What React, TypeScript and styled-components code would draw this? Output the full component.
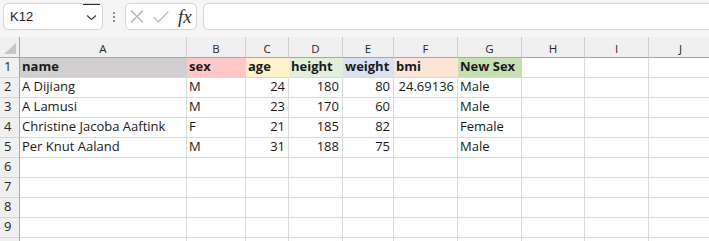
import React from 'react';
import styled, { createGlobalStyle } from 'styled-components';

const GlobalStyle = createGlobalStyle`
  html, body {
    margin: 0;
    padding: 0;
    background: #ffffff;
    overflow: hidden;
  }
  body {
    font-family: "Open Sans", "Noto Sans", sans-serif;
    color: #1f1f1f;
  }
`;

const COLS = [
  { key: 'A', width: 167 },
  { key: 'B', width: 59 },
  { key: 'C', width: 43 },
  { key: 'D', width: 54 },
  { key: 'E', width: 51 },
  { key: 'F', width: 64 },
  { key: 'G', width: 64 },
  { key: 'H', width: 63 },
  { key: 'I', width: 64 },
  { key: 'J', width: 64 },
];

const HEADER_FILLS = ['#d0cece', '#ffc7c7', '#fff2cc', '#e2efda', '#d9e1f2', '#fce4d6', '#c6e0b4'];

type CellValue = { text: string; num?: boolean };

const ROWS: CellValue[][] = [
  [{ text: 'name' }, { text: 'sex' }, { text: 'age' }, { text: 'height' }, { text: 'weight' }, { text: 'bmi' }, { text: 'New Sex' }],
  [{ text: 'A Dijiang' }, { text: 'M' }, { text: '24', num: true }, { text: '180', num: true }, { text: '80', num: true }, { text: '24.69136', num: true }, { text: 'Male' }],
  [{ text: 'A Lamusi' }, { text: 'M' }, { text: '23', num: true }, { text: '170', num: true }, { text: '60', num: true }, { text: '' }, { text: 'Male' }],
  [{ text: 'Christine Jacoba Aaftink' }, { text: 'F' }, { text: '21', num: true }, { text: '185', num: true }, { text: '82', num: true }, { text: '' }, { text: 'Female' }],
  [{ text: 'Per Knut Aaland' }, { text: 'M' }, { text: '31', num: true }, { text: '188', num: true }, { text: '75', num: true }, { text: '' }, { text: 'Male' }],
  [], [], [], [],
];

const Page = styled.div`
  width: 709px;
  height: 241px;
  overflow: hidden;
  background: #ffffff;
`;

const Toolbar = styled.div`
  display: flex;
  align-items: flex-start;
  height: 37px;
  box-sizing: border-box;
  padding: 3px 0 0 3px;
  background: #f5f5f5;
`;

const NameBox = styled.div`
  display: flex;
  align-items: center;
  justify-content: space-between;
  width: 100px;
  height: 27px;
  box-sizing: border-box;
  border: 1px solid #d4d4d4;
  border-radius: 5px;
  background: #ffffff;
  padding-left: 6px;
  font-family: "Liberation Sans", Arial, sans-serif;
  font-size: 13px;
  color: #262626;
`;

const DropButton = styled.div`
  display: flex;
  align-items: center;
  justify-content: center;
  align-self: flex-start;
  width: 17px;
  height: 24px;
  margin-right: 2px;
  border-top: 1px solid #2b2b2b;
  box-sizing: border-box;
  padding-top: 2px;
`;

const Grip = styled.div`
  display: flex;
  flex-direction: column;
  align-items: center;
  justify-content: center;
  gap: 2px;
  width: 22px;
  height: 27px;
`;

const Dot = styled.span`
  width: 2px;
  height: 2px;
  background: #8a8a8a;
`;

const FormulaButtons = styled.div`
  display: flex;
  align-items: center;
  width: 72px;
  height: 27px;
  box-sizing: border-box;
  border: 1px solid #d4d4d4;
  border-radius: 5px;
  background: #ffffff;
  padding-left: 4px;
  gap: 9px;
`;

const Fx = styled.span`
  font-family: "Liberation Serif", "Times New Roman", serif;
  font-style: italic;
  font-size: 19px;
  color: #2e2e2e;
  line-height: 1;
`;

const FormulaInput = styled.div`
  flex: 1;
  height: 27px;
  box-sizing: border-box;
  margin-left: 6px;
  margin-right: -10px;
  border: 1px solid #d4d4d4;
  border-radius: 5px;
  background: #ffffff;
`;

const Grid = styled.div`
  display: grid;
  grid-template-columns: 20px ${COLS.map(c => `${c.width}px`).join(' ')};
  grid-auto-rows: 20px;
  grid-template-rows: 21px;
`;

const Corner = styled.div`
  position: relative;
  background: #f0f0f0;
  border-right: 1px solid #a6a6a6;
  border-bottom: 1px solid #a6a6a6;
  box-sizing: border-box;
`;

const CornerTriangle = styled.div`
  position: absolute;
  right: 3px;
  bottom: 3px;
  width: 0;
  height: 0;
  border-left: 12px solid transparent;
  border-bottom: 11px solid #c6c6c6;
`;

const ColHead = styled.div`
  display: flex;
  align-items: center;
  justify-content: center;
  background: #f0f0f0;
  border-right: 1px solid #d0d0d0;
  border-bottom: 1px solid #a6a6a6;
  box-sizing: border-box;
  padding-top: 2px;
  font-size: 11.5px;
  color: #262626;
`;

const RowHead = styled.div`
  display: flex;
  align-items: flex-end;
  background: #f0f0f0;
  border-right: 1px solid #a6a6a6;
  border-bottom: 1px solid #d6d6d6;
  box-sizing: border-box;
  padding: 0 0 2px 4px;
  font-size: 13px;
  color: #262626;
  line-height: 17px;
`;

const Cell = styled.div<{ $fill?: string; $num?: boolean; $bold?: boolean }>`
  display: flex;
  align-items: flex-end;
  justify-content: ${p => (p.$num ? 'flex-end' : 'flex-start')};
  background: ${p => p.$fill || '#ffffff'};
  border-right: 1px solid ${p => (p.$fill ? 'transparent' : '#dadada')};
  border-bottom: 1px solid #dadada;
  box-sizing: border-box;
  padding: 0 3px 2px 2px;
  font-size: 13px;
  line-height: 17px;
  font-weight: ${p => (p.$bold ? 700 : 400)};
  color: #1a1a1a;
  white-space: nowrap;
  overflow: visible;
`;

const ChevronIcon = () => (
  <svg width="11" height="7" viewBox="0 0 11 7">
    <path d="M1 1.5 L5.5 5.5 L10 1.5" fill="none" stroke="#444" strokeWidth="1.2" />
  </svg>
);

const CrossIcon = () => (
  <svg width="14" height="13" viewBox="0 0 14 13">
    <path d="M1 0.5 L13 12.5 M13 0.5 L1 12.5" stroke="#b4b4b4" strokeWidth="1.2" />
  </svg>
);

const CheckIcon = () => (
  <svg width="16" height="12" viewBox="0 0 16 12">
    <path d="M0.7 6.2 L5.3 11 L15.3 0.6" fill="none" stroke="#b4b4b4" strokeWidth="1.2" />
  </svg>
);

export default function App() {
  return (
    <Page>
      <GlobalStyle />
      <Toolbar>
        <NameBox>
          <span>K12</span>
          <DropButton>
            <ChevronIcon />
          </DropButton>
        </NameBox>
        <Grip>
          <Dot />
          <Dot />
          <Dot />
        </Grip>
        <FormulaButtons>
          <CrossIcon />
          <CheckIcon />
          <Fx>fx</Fx>
        </FormulaButtons>
        <FormulaInput />
      </Toolbar>
      <Grid>
        <Corner>
          <CornerTriangle />
        </Corner>
        {COLS.map(c => (
          <ColHead key={c.key}>{c.key}</ColHead>
        ))}
        {ROWS.map((row, r) => (
          <React.Fragment key={r}>
            <RowHead>{r + 1}</RowHead>
            {COLS.map((c, ci) => {
              const cell = row[ci];
              const isHeader = r === 0 && ci < HEADER_FILLS.length;
              return (
                <Cell
                  key={c.key}
                  $fill={isHeader ? HEADER_FILLS[ci] : undefined}
                  $num={cell?.num}
                  $bold={r === 0}
                >
                  {cell?.text}
                </Cell>
              );
            })}
          </React.Fragment>
        ))}
        <RowHead />
        {COLS.map(c => (
          <Cell key={c.key} />
        ))}
      </Grid>
    </Page>
  );
}
